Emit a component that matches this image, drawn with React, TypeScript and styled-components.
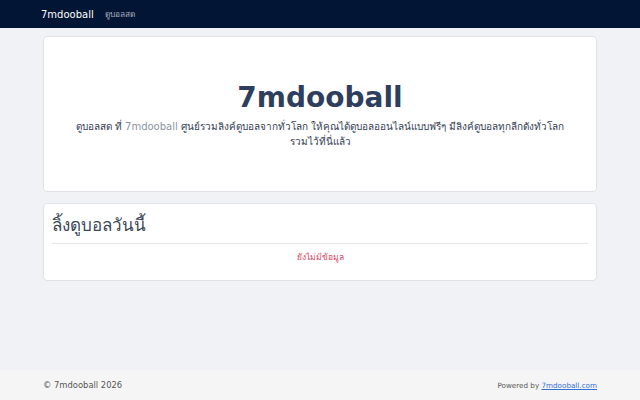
import React from 'react'
import styled, { createGlobalStyle } from 'styled-components'

const GlobalStyle = createGlobalStyle`
  html, body {
    margin: 0;
    padding: 0;
    height: 100%;
  }
  body {
    background: #f1f2f5;
    font-family: 'DejaVu Sans', 'Noto Sans', sans-serif;
    color: #333;
  }
  #root {
    min-height: 100%;
    display: flex;
    flex-direction: column;
  }
`

const Page = styled.div`
  min-height: 400px;
  display: flex;
  flex-direction: column;
`

const Navbar = styled.nav`
  height: 28px;
  background: #031535;
  display: flex;
  align-items: center;
  padding: 0 41px;
  gap: 11px;
`

const Brand = styled.a`
  color: #fff;
  font-size: 10px;
  text-decoration: none;
`

const NavLink = styled.a`
  color: #aab1bf;
  font-size: 8.3px;
  text-decoration: none;
`

const Main = styled.main`
  flex: 1;
  padding: 8px 43px 0;
  display: flex;
  flex-direction: column;
  gap: 11px;
`

const Card = styled.section<{ $hero?: boolean }>`
  background: #fff;
  border: 1px solid #dfe1e6;
  border-radius: 4px;
  padding: ${p => (p.$hero ? '44px 30px 42px' : '8px 8px 16px')};
  text-align: ${p => (p.$hero ? 'center' : 'left')};
`

const HeroTitle = styled.h1`
  margin: 0;
  font-size: 28px;
  font-weight: bold;
  color: #2d3e5e;
  line-height: 34px;
`

const HeroText = styled.p`
  margin: 4px 0 0;
  font-size: 10px;
  line-height: 15px;
  color: #354052;
`

const Muted = styled.span`
  color: #8a93a3;
`

const SectionTitle = styled.h2`
  margin: 0;
  font-size: 17px;
  font-weight: normal;
  color: #3a4556;
  line-height: 26px;
  padding-bottom: 5px;
  border-bottom: 1px solid #e3e5e9;
`

const Empty = styled.p`
  margin: 6px 0 0;
  text-align: center;
  font-size: 8.5px;
  color: #d0455f;
`

const Footer = styled.footer`
  height: 30px;
  margin-top: auto;
  background: #f5f5f5;
  display: flex;
  align-items: center;
  justify-content: space-between;
  padding: 0 43px;
  color: #555;
`

const Copyright = styled.span`
  font-size: 8.4px;
`

const Powered = styled.span`
  font-size: 7.2px;
`

const FooterLink = styled.a`
  color: #2f6fd6;
  text-decoration: underline;
`

export default function App() {
  return (
    <Page>
      <GlobalStyle />
      <Navbar>
        <Brand href="#">7mdooball</Brand>
        <NavLink href="#">ดูบอลสด</NavLink>
      </Navbar>
      <Main>
        <Card $hero>
          <HeroTitle>7mdooball</HeroTitle>
          <HeroText>
            ดูบอลสด ที่ <Muted>7mdooball</Muted> ศูนย์รวมลิงค์ดูบอลจากทั่วโลก ให้คุณได้ดูบอลออนไลน์แบบฟรีๆ
            มีลิงค์ดูบอลทุกลีกดังทั่วโลก รวมไว้ที่นี่แล้ว
          </HeroText>
        </Card>
        <Card>
          <SectionTitle>ลิ้งดูบอลวันนี้</SectionTitle>
          <Empty>ยังไม่มีข้อมูล</Empty>
        </Card>
      </Main>
      <Footer>
        <Copyright>© 7mdooball 2026</Copyright>
        <Powered>
          Powered by <FooterLink href="#">7mdooball.com</FooterLink>
        </Powered>
      </Footer>
    </Page>
  )
}
